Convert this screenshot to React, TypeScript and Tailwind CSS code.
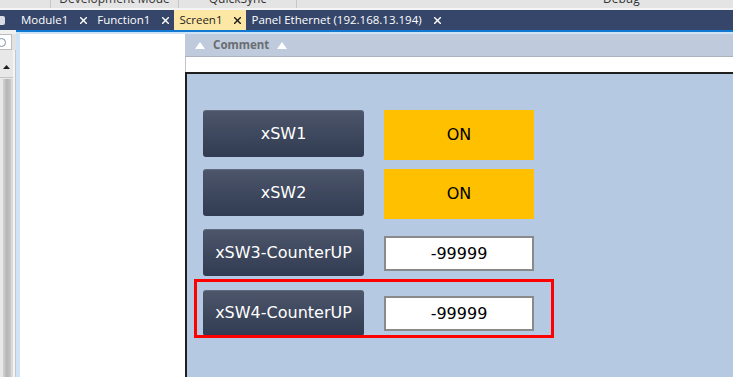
import React from 'react';

const tabs = [
  { label: 'Module1', active: false },
  { label: 'Function1', active: false },
  { label: 'Screen1', active: true },
  { label: 'Panel Ethernet (192.168.13.194)', active: false },
];

function CloseMark({ dark }: { dark?: boolean }) {
  return (
    <svg width="7" height="7" viewBox="0 0 7 7" className="shrink-0">
      <path
        d="M0.5 0.5 L6.5 6.5 M6.5 0.5 L0.5 6.5"
        stroke={dark ? '#1b1b1b' : '#ffffff'}
        strokeWidth="1.4"
        strokeLinecap="square"
      />
    </svg>
  );
}

function HmiButton({ label, h }: { label: string; h: string }) {
  return (
    <div
      className={`w-[161px] ${h} shrink-0 rounded-[3px] flex items-center justify-center text-white text-[16px] bg-gradient-to-b from-[#4d566b] to-[#313b51] shadow-[inset_0_1px_0_rgba(255,255,255,0.12)]`}
      style={{ fontFamily: '"DejaVu Sans", sans-serif' }}
    >
      {label}
    </div>
  );
}

function OnLamp() {
  return (
    <div
      className="w-[150px] h-[50px] bg-[#ffc000] flex items-center justify-center text-black text-[16px]"
      style={{ fontFamily: '"DejaVu Sans", sans-serif' }}
    >
      ON
    </div>
  );
}

function ValueBox({ mt }: { mt: string }) {
  return (
    <div
      className={`${mt} w-[150px] h-[35px] bg-white border-2 border-[#8a8a8a] flex items-center justify-center text-black text-[16px]`}
      style={{ fontFamily: '"DejaVu Sans", sans-serif' }}
    >
      -99999
    </div>
  );
}

export default function App(): React.ReactElement {
  return (
    <div
      className="w-[733px] h-[377px] overflow-hidden flex flex-col bg-[#f0f0f0]"
      style={{ fontFamily: '"Open Sans", "Noto Sans", sans-serif' }}
    >
      {/* ribbon remnant, cut by the window edge */}
      <div className="h-[8px] shrink-0 bg-[#e4e4e4] overflow-hidden flex text-[12px] text-[#333]">
        <div className="w-[51px] border-r border-[#c8c8c8]" />
        <div className="w-[128px] border-r border-[#c8c8c8] flex justify-center">
          <span className="-mt-[9px] leading-[16px]">Development Mode</span>
        </div>
        <div className="w-[118px] border-r border-[#c8c8c8] flex justify-center">
          <span className="-mt-[9px] leading-[16px]">QuickSync</span>
        </div>
        <div className="flex-1 pl-[306px]">
          <span className="-mt-[9px] leading-[16px] block">Debug</span>
        </div>
      </div>
      <div className="h-[2px] shrink-0 bg-[#f4f4f4]" />

      <div className="flex-1 flex min-h-0">
        {/* left narrow pane */}
        <div className="w-[16px] shrink-0 flex flex-col">
          <div className="h-[20px] bg-[#35466a] flex items-center overflow-hidden">
            <div className="w-[6px] h-[9px] bg-[#d8dce4] rounded-r-[2px] -ml-[1px]" />
          </div>
          <div className="h-[4px] bg-[#f0f0f0]" />
          <div className="flex">
            <div className="w-[12px] h-[16px] bg-white border border-[#bcbcbc] border-l-0 overflow-hidden flex items-center">
              <div className="w-[9px] h-[9px] rounded-full border border-[#7c8fa8] -ml-[3px]" />
            </div>
            <div className="flex-1 bg-[#e2e2e2]" />
          </div>
          <div className="flex-1 flex bg-[#e8e8e8]">
            <div className="w-[13px] flex flex-col">
              <div className="h-[28px] border-b border-[#c4c4c4] flex items-end justify-center pb-[8px]">
                <svg width="7" height="4" viewBox="0 0 7 4">
                  <path d="M0 4 L3.5 0 L7 4 Z" fill="#1e1e1e" />
                </svg>
              </div>
              <div className="flex-1 flex pt-[1px]">
                <div className="w-[3px]" />
                <div className="w-[8px] bg-gradient-to-r from-[#d2d2d2] via-[#b4b4b4] to-[#c8c8c8]" />
                <div className="w-[2px] bg-[#dadada]" />
              </div>
            </div>
            <div className="w-[2px] bg-[#f4f4f4]" />
            <div className="w-[1px] bg-[#c6c6c6]" />
          </div>
        </div>

        {/* main column */}
        <div className="flex-1 flex flex-col min-w-0">
          <div className="h-[20px] shrink-0 bg-[#35466a] flex items-stretch text-[11.5px]">
            {tabs.map((t) => (
              <div
                key={t.label}
                className={
                  t.active
                    ? 'flex items-center pl-[5px] pr-[5px] gap-[12px] bg-[#fde7a4] text-[#1e1e1e]'
                    : 'flex items-center pl-[5px] pr-[5px] gap-[12px] text-white'
                }
              >
                <span className="whitespace-nowrap">{t.label}</span>
                <CloseMark dark={t.active} />
              </div>
            ))}
          </div>
          <div className="h-[2px] shrink-0 bg-[#1279d3]" />
          <div className="h-[2px] shrink-0 bg-[#cfe3f6]" />

          <div className="flex-1 flex min-h-0">
            <div className="w-[4px] shrink-0 bg-[#cfe3f6]" />
            <div className="w-[165px] shrink-0 bg-white" />

            {/* editor */}
            <div className="flex-1 flex flex-col min-w-0">
              <div className="h-[23px] shrink-0 bg-[#bfcbdc] border-b border-[#a9b2bd] flex items-center pl-[10px] gap-[8px] text-[11.5px] font-bold text-[#6a6d72]">
                <svg width="10" height="7" viewBox="0 0 10 7">
                  <path d="M0 7 L5 0 L10 7 Z" fill="#ffffff" />
                </svg>
                <span className="w-[56px]" style={{ fontFamily: '"Noto Sans", sans-serif' }}>
                  Comment
                </span>
                <svg width="10" height="7" viewBox="0 0 10 7">
                  <path d="M0 7 L5 0 L10 7 Z" fill="#ffffff" />
                </svg>
              </div>
              <div className="h-[15px] shrink-0 bg-white border-l border-[#c4c4c4]" />
              <div className="h-[2px] shrink-0 bg-[#1f1f1f]" />

              <div className="flex-1 relative bg-[#b5c9e2] border-l-2 border-[#1f1f1f] pl-[16px] pt-[36px] flex flex-col">
                <div className="flex gap-[20px] items-start">
                  <HmiButton label="xSW1" h="h-[47px]" />
                  <OnLamp />
                </div>
                <div className="flex gap-[20px] items-start mt-[9px]">
                  <HmiButton label="xSW2" h="h-[47px]" />
                  <OnLamp />
                </div>
                <div className="flex gap-[20px] items-start mt-[10px]">
                  <HmiButton label="xSW3-CounterUP" h="h-[47px]" />
                  <ValueBox mt="mt-[7px]" />
                </div>
                <div className="flex gap-[20px] items-start mt-[14px]">
                  <HmiButton label="xSW4-CounterUP" h="h-[46px]" />
                  <ValueBox mt="mt-[6px]" />
                </div>

                <div className="absolute left-[7px] top-[205px] w-[360px] h-[59px] border-[3px] border-[#ff0000]" />
              </div>
            </div>
          </div>
        </div>
      </div>
    </div>
  );
}
